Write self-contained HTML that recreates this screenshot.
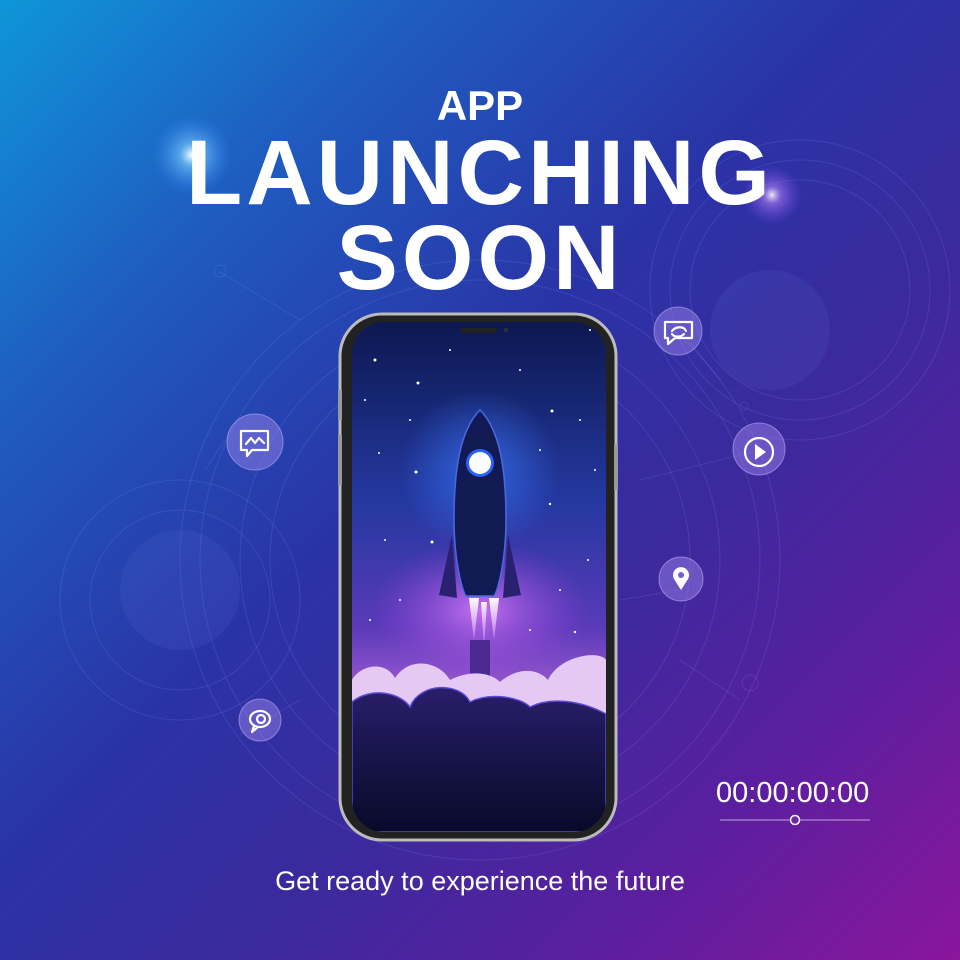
<!DOCTYPE html>
<html><head><meta charset="utf-8"><style>
html,body{margin:0;padding:0;width:960px;height:960px;overflow:hidden}
body{position:relative;font-family:"Liberation Sans",sans-serif;
background:linear-gradient(135deg,#0e96d8 0%,#1f5cc0 22%,#2a33a6 45%,#3a2a9e 62%,#5a1f9e 80%,#8a169c 100%);}
.t{position:absolute;left:0;width:960px;text-align:center;color:#fff;font-weight:bold;}
</style></head><body>
<svg width="960" height="960" style="position:absolute;left:0;top:0">
<defs>
<radialGradient id="glowL" cx="0.5" cy="0.5" r="0.5"><stop offset="0" stop-color="#fff" stop-opacity="1"/><stop offset="0.3" stop-color="#7fd0ff" stop-opacity="0.6"/><stop offset="1" stop-color="#3a8aff" stop-opacity="0"/></radialGradient>
<radialGradient id="glowR" cx="0.5" cy="0.5" r="0.5"><stop offset="0" stop-color="#fff" stop-opacity="0.9"/><stop offset="0.3" stop-color="#c08aff" stop-opacity="0.5"/><stop offset="1" stop-color="#8a4aff" stop-opacity="0"/></radialGradient>
<linearGradient id="scr" x1="0" y1="0" x2="0" y2="1"><stop offset="0" stop-color="#0d1850"/><stop offset="0.35" stop-color="#2438a0"/><stop offset="0.6" stop-color="#5a3ab8"/><stop offset="0.72" stop-color="#9a58d0"/><stop offset="0.75" stop-color="#6a3aa8"/><stop offset="1" stop-color="#0a0a30"/></linearGradient>
<linearGradient id="grd" x1="0" y1="0" x2="0" y2="1"><stop offset="0" stop-color="#2a1e6a"/><stop offset="0.4" stop-color="#1a1650"/><stop offset="1" stop-color="#080a28"/></linearGradient>
<radialGradient id="rglow" cx="0.5" cy="0.5" r="0.5"><stop offset="0" stop-color="#e080ff" stop-opacity="0.8"/><stop offset="1" stop-color="#a040e0" stop-opacity="0"/></radialGradient>
<radialGradient id="bglow" cx="0.5" cy="0.5" r="0.5"><stop offset="0" stop-color="#3a7aff" stop-opacity="0.7"/><stop offset="1" stop-color="#3a7aff" stop-opacity="0"/></radialGradient>
<linearGradient id="flame" x1="0" y1="0" x2="0" y2="1"><stop offset="0" stop-color="#fff"/><stop offset="1" stop-color="#e0a0ff" stop-opacity="0.3"/></linearGradient>
<clipPath id="sc"><rect x="352" y="322" width="254" height="510" rx="32"/></clipPath>
</defs>
<g fill="none" stroke="#9ab0ff" stroke-opacity="0.15" stroke-width="1">
<circle cx="480" cy="560" r="280"/><circle cx="480" cy="560" r="240"/><circle cx="480" cy="560" r="300"/>
<circle cx="480" cy="560" r="210"/>
<circle cx="800" cy="290" r="150"/><circle cx="800" cy="290" r="130"/><circle cx="800" cy="290" r="110"/>
<circle cx="180" cy="600" r="120"/><circle cx="180" cy="600" r="90"/>
<path d="M220 272 L 300 320 M205 470 L225 440 M680 330 L720 380 M640 480 L760 450 M620 600 L680 590 M680 660 L740 700 M240 735 L300 700"/>
<circle cx="220" cy="271" r="6"/><circle cx="750" cy="683" r="8"/><circle cx="744" cy="406" r="4"/>
</g>
<g fill="#6a7ae0" fill-opacity="0.12"><circle cx="770" cy="330" r="60"/><circle cx="180" cy="590" r="60"/></g>
<circle cx="192" cy="155" r="40" fill="url(#glowL)"/>
<circle cx="772" cy="195" r="30" fill="url(#glowR)"/>
<rect x="340" y="314" width="276" height="526" rx="42" fill="#222" stroke="#bbb" stroke-width="3"/>
<rect x="338" y="390" width="4" height="30" fill="#999"/><rect x="338" y="435" width="4" height="50" fill="#999"/><rect x="614" y="445" width="4" height="45" fill="#999"/>
<g clip-path="url(#sc)">
<rect x="352" y="322" width="254" height="510" fill="url(#scr)"/>
<ellipse cx="480" cy="470" rx="80" ry="80" fill="url(#bglow)"/>
<ellipse cx="480" cy="610" rx="110" ry="70" fill="url(#rglow)"/>
<g fill="#fff">
<circle cx="375" cy="360" r="1.5"/><circle cx="418" cy="383" r="1.5"/><circle cx="552" cy="411" r="1.5"/><circle cx="416" cy="472" r="1.5"/><circle cx="432" cy="542" r="1.5"/><circle cx="550" cy="504" r="1.2"/><circle cx="575" cy="632" r="1.2"/><circle cx="379" cy="453" r="1"/><circle cx="580" cy="420" r="1"/><circle cx="400" cy="600" r="1"/><circle cx="560" cy="590" r="1"/><circle cx="385" cy="540" r="1"/><circle cx="590" cy="330" r="1"/><circle cx="450" cy="350" r="1"/><circle cx="520" cy="370" r="1"/><circle cx="365" cy="400" r="1"/><circle cx="595" cy="470" r="1"/><circle cx="540" cy="450" r="1"/><circle cx="410" cy="420" r="1"/><circle cx="588" cy="560" r="1"/><circle cx="370" cy="620" r="1"/><circle cx="530" cy="630" r="1"/>
</g>
<path d="M439 595 L452 535 L457 598 Z M521 595 L508 535 L503 598 Z" fill="#2a2070"/>
<path d="M480 410 C460 430 454 470 454 520 C454 560 462 590 466 596 L494 596 C498 590 506 560 506 520 C506 470 500 430 480 410 Z" fill="#111a52" stroke="#4a6ae0" stroke-width="1.5"/>
<circle cx="480" cy="463" r="14" fill="#2a60ff"/><circle cx="480" cy="463" r="11" fill="#fff"/>
<path d="M469 598 L474 640 L479 598 Z M481 602 L484 648 L487 602 Z M489 598 L494 640 L499 598Z" fill="url(#flame)"/>
<rect x="470" y="640" width="20" height="60" fill="#4a2a90"/>
<path d="M352 680 C360 665 385 660 395 678 C410 655 440 662 450 680 C470 670 490 672 500 682 C520 665 540 670 548 680 C560 655 600 650 606 660 L606 720 L352 720Z" fill="#e6c8f5"/>
<path d="M352 702 C370 687 400 692 410 707 C420 682 460 682 470 702 C490 692 520 697 530 707 C550 697 580 700 606 714 L606 832 L352 832 Z" fill="url(#grd)" stroke="#5a4ad0" stroke-width="1.5"/>
<rect x="460" y="328" width="37" height="5" rx="2.5" fill="#222"/><circle cx="506" cy="330" r="2" fill="#333"/>
</g>
<g fill="#a28af0" fill-opacity="0.45" stroke="#d0c0ff" stroke-opacity="0.5">
<circle cx="255" cy="442" r="28"/><circle cx="260" cy="720" r="21"/><circle cx="678" cy="331" r="24"/><circle cx="759" cy="449" r="26"/><circle cx="681" cy="579" r="22"/>
</g>
<g fill="none" stroke="#fff" stroke-width="2.2" stroke-linejoin="round" stroke-linecap="round">
<path d="M241 431 H268 V450 H252 L247 456 V450 H241 Z"/><path d="M246 444 L251 438 L255 443 L259 438 L264 443"/>
<ellipse cx="260" cy="719" rx="10" ry="8"/><circle cx="261" cy="719" r="4"/><path d="M254 726 L252 732 L258 727"/>
<path d="M665 322 H692 V338 H675 L668 344 V338 H665 Z"/><path d="M672 331 C676 326 684 326 686 331 M684 334 C680 338 674 337 672 334"/>
<circle cx="759" cy="452" r="14"/>
</g>
<path d="M755 444 L766 452 L755 460 Z" fill="#fff"/>
<path d="M681 590 L674 579 A8 8 0 1 1 688 579 Z" fill="#fff"/><circle cx="681" cy="575" r="3" fill="#7a5ad0"/>
<line x1="720" y1="820" x2="870" y2="820" stroke="#fff" stroke-opacity="0.6" stroke-width="1"/>
<circle cx="795" cy="820" r="4.5" fill="#6a2aa0" stroke="#fff" stroke-width="1.5"/>
</svg>
<div class="t" style="top:82px;font-size:42px;">APP</div>
<div class="t" style="top:127px;font-size:92px;letter-spacing:4px;line-height:92px;">LAUNCHING</div>
<div class="t" style="top:212px;font-size:92px;letter-spacing:4px;line-height:92px;">SOON</div>
<div style="position:absolute;left:716px;top:777px;color:#fff;font-size:29px;">00:00:00:00</div>
<div class="t" style="top:866px;font-size:27px;font-weight:normal;">Get ready to experience the future</div>
</body></html>
